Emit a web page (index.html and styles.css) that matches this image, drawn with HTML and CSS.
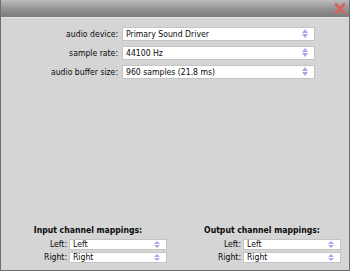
FILE: index.html
```html
<!DOCTYPE html>
<html lang="en">
<head>
    <meta charset="UTF-8">
    <title>Audio Settings</title>
    <link rel="stylesheet" href="styles.css">
</head>
<body>

<div class="window">
    <div class="titlebar">
        <svg class="close" width="12" height="11" viewBox="0 0 12 11">
            <path d="M2 1.5 L10 9.5 M10 1.5 L2 9.5" stroke="#d8625d" stroke-width="2.8" stroke-linecap="round"/>
        </svg>
    </div>

    <div class="settings">
        <label>audio device:</label>
        <div class="select">Primary Sound Driver</div>
        <label>sample rate:</label>
        <div class="select">44100 Hz</div>
        <label>audio buffer size:</label>
        <div class="select">960 samples (21.8 ms)</div>
    </div>

    <div class="mappings">
        <div class="panel">
            <div class="panel-title">Input channel mappings:</div>
            <div class="panel-grid">
                <label>Left:</label>
                <div class="select small">Left</div>
                <label>Right:</label>
                <div class="select small">Right</div>
            </div>
        </div>
        <div class="panel">
            <div class="panel-title">Output channel mappings:</div>
            <div class="panel-grid">
                <label>Left:</label>
                <div class="select small">Left</div>
                <label>Right:</label>
                <div class="select small">Right</div>
            </div>
        </div>
    </div>
</div>

</body>
</html>
```

FILE: styles.css
```css
html, body {
    margin: 0;
    padding: 0;
}
body {
    font-family: "DejaVu Sans Condensed", "DejaVu Sans", sans-serif;
    font-size: 8.6px;
    color: #0a0a0a;
}
.window {
    width: 350px;
    height: 271px;
    box-sizing: border-box;
    border: 1px solid #6e6e6e;
    border-top: none;
    background: #d5d5d5;
    display: flex;
    flex-direction: column;
}
.titlebar {
    height: 17px;
    flex-shrink: 0;
    background: linear-gradient(#bcbcbc, #8e8e8e 60%, #7c7c7c);
    border-bottom: 1px solid #e6e6e6;
    display: flex;
    justify-content: flex-end;
    align-items: center;
    padding-right: 3px;
}
.close {
    display: block;
}
.settings {
    display: grid;
    grid-template-columns: 117px 193px;
    grid-auto-rows: 14px;
    column-gap: 4px;
    row-gap: 5px;
    padding-top: 9px;
}
.settings label,
.panel-grid label {
    text-align: right;
    line-height: 14px;
}
.select {
    position: relative;
    background: #fff;
    border: 1px solid #c4c4c4;
    box-sizing: border-box;
    padding-left: 3px;
    line-height: 12px;
    white-space: nowrap;
}
.select::before,
.select::after {
    content: "";
    position: absolute;
    right: 6px;
    width: 0;
    height: 0;
    border-left: 3px solid transparent;
    border-right: 3px solid transparent;
}
.select::before {
    top: 1px;
    border-bottom: 4px solid #a9a6ec;
}
.select::after {
    bottom: 2px;
    border-top: 4px solid #a9a6ec;
}
.select.small {
    line-height: 9px;
}
.select.small::before {
    top: 1px;
    border-bottom-width: 3px;
}
.select.small::after {
    bottom: 1px;
    border-top-width: 3px;
}
.mappings {
    margin-top: auto;
    display: flex;
    padding-bottom: 7px;
}
.panel {
    width: 174px;
}
.panel-title {
    font-weight: bold;
    text-align: center;
    line-height: 10px;
    margin-bottom: 4px;
}
.panel-grid {
    display: grid;
    grid-template-columns: 66px 98px;
    grid-auto-rows: 11px;
    column-gap: 2px;
    row-gap: 2px;
}
.panel-grid label {
    line-height: 11px;
}
```
